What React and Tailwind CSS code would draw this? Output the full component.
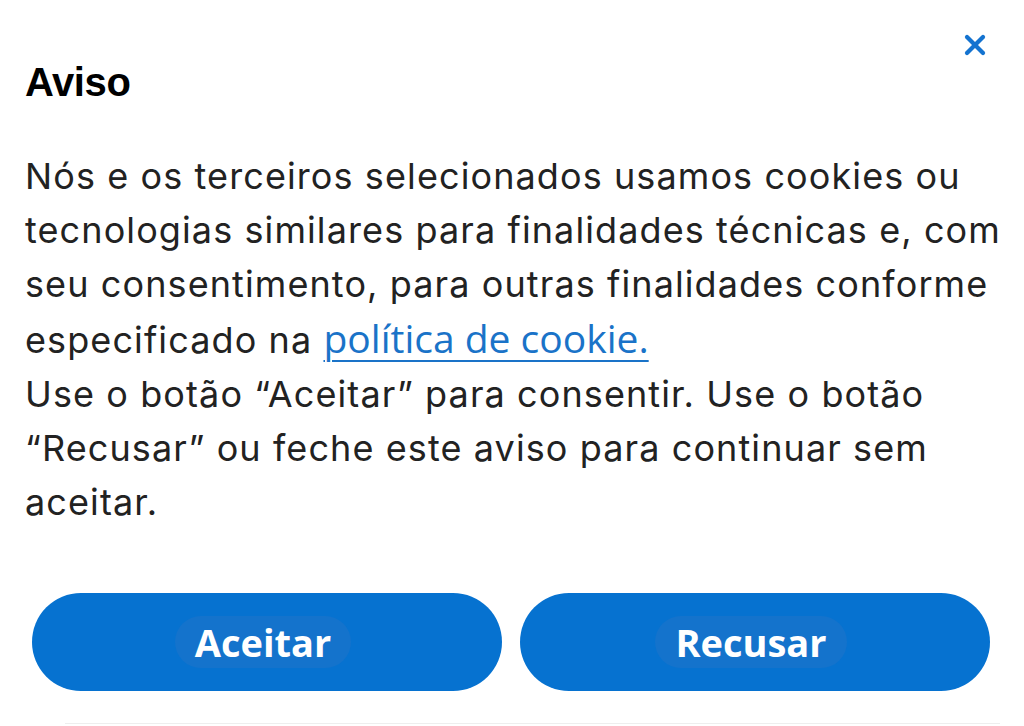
import { X } from "lucide-react";

const body = { fontFamily: "Inter, 'Noto Sans', sans-serif" };
const btn = { fontFamily: "'Open Sans', sans-serif" };

export default function App() {
  return (
    <div className="w-[1024px] h-[726px] bg-white overflow-hidden relative">
      {/* close */}
      <button className="absolute right-[33px] top-[29px] text-[#1473d0]">
        <X size={32} strokeWidth={3.2} />
      </button>

      <div className="pl-[25px] pt-[60px]">
        <h2
          className="text-[40px] font-bold text-black leading-[44px] tracking-[-0.4px]"
          style={{ fontFamily: "'Liberation Sans', Arial, sans-serif" }}
        >
          Aviso
        </h2>

        <p
          className="mt-[45px] text-[36px] leading-[54px] text-[#222222] tracking-[1.1px]"
          style={body}
        >
          Nós e os terceiros selecionados usamos cookies ou
          <br />
          tecnologias similares para finalidades técnicas e, com
          <br />
          seu consentimento, para outras finalidades conforme
          <br />
          especificado na{" "}
          <a
            href="#"
            className="text-[#1a73c8] text-[39px] tracking-normal underline decoration-2 underline-offset-[7px]"
            style={btn}
          >
            política de cookie.
          </a>
          <br />
          Use o botão “Aceitar” para consentir. Use o botão
          <br />
          “Recusar” ou feche este aviso para continuar sem
          <br />
          aceitar.
        </p>
      </div>

      <div className="flex gap-[18px] pl-[32px] mt-[64px]">
        {["Aceitar", "Recusar"].map((t) => (
          <button
            key={t}
            className="w-[470px] h-[98px] rounded-full bg-[#0672d0] flex items-center justify-center"
          >
            <span
              className="px-[20px] py-[4px] -ml-[8px] rounded-full bg-[#1473cc] text-white text-[38px] font-bold leading-[44px]"
              style={btn}
            >
              {t}
            </span>
          </button>
        ))}
      </div>
      <div className="absolute left-[65px] right-[24px] bottom-[2px] h-px bg-[#eeeeee]" />
    </div>
  );
}
